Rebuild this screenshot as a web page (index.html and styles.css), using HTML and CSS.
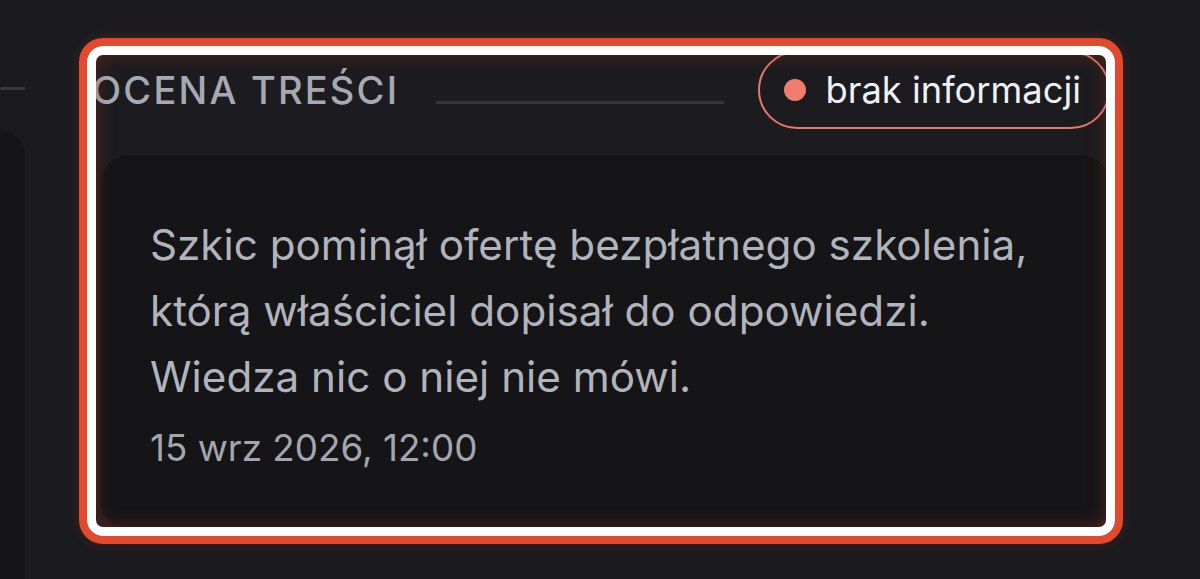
FILE: index.html
```html
<!DOCTYPE html>
<html lang="pl">
<head>
<meta charset="utf-8">
<title>Ocena treści</title>
<link rel="stylesheet" href="styles.css">
</head>
<body>
<div class="page">
  <aside class="left-col">
    <div class="left-rule"></div>
    <div class="left-card"></div>
  </aside>
  <section class="review">
    <header class="review-head">
      <h2 class="review-title">OCENA TREŚCI</h2>
      <div class="review-rule"></div>
      <div class="badge"><span class="badge-dot"></span><span class="badge-text">brak informacji</span></div>
    </header>
    <div class="review-card">
      <p class="review-text">Szkic pominął ofertę bezpłatnego szkolenia, którą właściciel dopisał do odpowiedzi. Wiedza nic o niej nie mówi.</p>
      <div class="review-date">15 wrz 2026, 12:00</div>
    </div>
    <div class="highlight"><div class="highlight-inner"></div></div>
  </section>
</div>
</body>
</html>
```

FILE: styles.css
```css
html, body {
  margin: 0;
  padding: 0;
  background: #1b1b1f;
  font-family: Inter, "Noto Sans", sans-serif;
}

.page {
  display: flex;
  gap: 67px;
  padding-top: 51px;
  height: 579px;
  box-sizing: border-box;
  overflow: hidden;
}

.left-col {
  width: 25px;
  flex-shrink: 0;
  display: flex;
  flex-direction: column;
  padding-top: 36px;
}

.left-rule {
  height: 3px;
  background: #38383e;
  border-radius: 2px 0 0 2px;
}

.left-card {
  flex: 1;
  margin-top: 40px;
  background: #151518;
  border-top-right-radius: 26px;
}

.review {
  position: relative;
  width: 1018px;
  height: 479px;
  flex-shrink: 0;
  display: flex;
  flex-direction: column;
  background: #1c1c20;
}

.review-head {
  display: flex;
  align-items: center;
  height: 78px;
}

.review-title {
  margin: 0;
  font-size: 38px;
  font-weight: 500;
  letter-spacing: 2.2px;
  color: #a6a9b1;
  white-space: nowrap;
}

.review-rule {
  flex: 1;
  height: 3px;
  margin: 24px 34px 0 37px;
  background: #35353b;
  border-radius: 2px;
}

.badge {
  display: flex;
  align-items: center;
  gap: 20px;
  height: 78px;
  box-sizing: border-box;
  padding: 0 27px 0 24px;
  border: 2.5px solid #e9776a;
  border-radius: 40px;
}

.badge-dot {
  width: 22px;
  height: 22px;
  border-radius: 50%;
  background: #f07c6e;
}

.badge-text {
  font-size: 36.3px;
  color: #eef1f6;
  white-space: nowrap;
}

.review-card {
  flex: 1;
  margin: 26px 0 0 8px;
  padding: 57px 50px 0 50px;
  background: #151517;
  border-radius: 30px;
}

.review-text {
  margin: 0;
  font-size: 42.2px;
  line-height: 66px;
  color: #b1b4bc;
  max-width: 900px;
}

.review-date {
  margin-top: 9px;
  font-size: 36.8px;
  line-height: 58px;
  color: #a3a6ae;
}

.highlight {
  position: absolute;
  top: -13px;
  left: -13px;
  right: -13px;
  bottom: -14px;
  border: 8px solid #e3492c;
  border-radius: 24px;
  box-shadow: 0 0 12px rgba(220, 70, 40, 0.18);
  pointer-events: none;
}

.highlight-inner {
  width: 100%;
  height: 100%;
  box-sizing: border-box;
  border: 9px solid #ffffff;
  border-radius: 16px;
  box-shadow: inset 0 0 16px 2px rgba(170, 45, 25, 0.35);
}
```
